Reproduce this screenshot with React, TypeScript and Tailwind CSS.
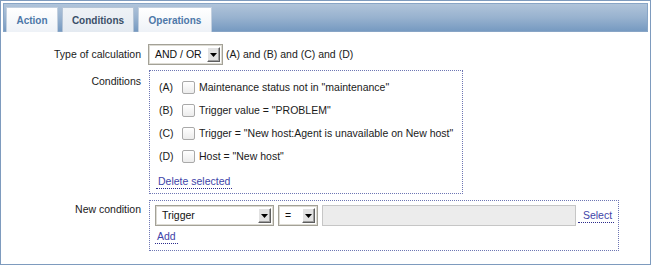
import React from "react";

const Arrow = () => (
  <span className="mr-[2px] flex h-[15px] w-[13px] shrink-0 items-center justify-center border border-t-white border-l-white border-b-[#5e5e5e] border-r-[#5e5e5e] bg-[#e2e2e2] shadow-[inset_-1px_-1px_0_#a0a0a0]">
    <svg width="7" height="4" viewBox="0 0 7 4">
      <polygon points="0,0 7,0 3.5,4" fill="#000" />
    </svg>
  </span>
);

const Select = ({ text, className }: { text: string; className: string }) => (
  <div
    className={
      "flex h-[21px] shrink-0 items-center border border-[#a3a197] bg-white shadow-[inset_0_0_0_1px_#dddbd3] " +
      className
    }
  >
    <span className="flex-1 whitespace-nowrap pl-[6px] text-[#111]">{text}</span>
    <Arrow />
  </div>
);

const Checkbox = () => (
  <span className="h-[13px] w-[13px] shrink-0 rounded-[2px] border border-[#a9a9a9] bg-gradient-to-b from-white to-[#ececec]" />
);

const LinkText = ({ children }: { children: React.ReactNode }) => (
  <span className="whitespace-nowrap border-b border-dotted border-[#2c2c8c] px-[2px] leading-[13px] text-[#3e44a8]">
    {children}
  </span>
);

const conditions = [
  ["(A)", 'Maintenance status not in "maintenance"'],
  ["(B)", 'Trigger value = "PROBLEM"'],
  ["(C)", 'Trigger = "New host:Agent is unavailable on New host"'],
  ["(D)", 'Host = "New host"'],
];

export default function App() {
  return (
    <div
      className="h-[265px] w-[651px] overflow-hidden bg-white text-[10.5px] text-[#1a1a1a]"
      style={{ fontFamily: '"Liberation Sans", Arial, sans-serif' }}
    >
      <div className="flex h-[265px] w-[651px] flex-col border border-[#7e9bbe] p-[2px]">
        {/* tab header */}
        <div className="flex h-[29px] shrink-0 items-end gap-[4px] border border-[#88a5c6] bg-gradient-to-b from-[#b0c4da] via-[#98b2cf] to-[#769ac1] pl-[2px]">
          <div className="-mb-px flex h-[25px] w-[52px] items-center justify-center border border-[#c3d0df] border-b-0 bg-gradient-to-b from-white to-[#eef2f7] font-bold text-[10px] text-[#4d77a8]">
            Action
          </div>
          <div className="-mb-px flex h-[25px] w-[72px] items-center justify-center border border-[#b4c4d6] border-b-0 bg-gradient-to-b from-[#eef2f6] to-[#e4eaf1] font-bold text-[10px] text-[#3a4f68]">
            Conditions
          </div>
          <div className="-mb-px flex h-[25px] w-[74px] items-center justify-center border border-[#c3d0df] border-b-0 bg-gradient-to-b from-white to-[#eef2f7] font-bold text-[10px] text-[#4d77a8]">
            Operations
          </div>
        </div>

        {/* form */}
        <div className="flex flex-col pt-[12px]">
          {/* type of calculation */}
          <div className="flex items-center">
            <div className="w-[138px] shrink-0 whitespace-nowrap text-right">Type of calculation</div>
            <div className="ml-[7px] flex items-center">
              <Select text="AND / OR" className="w-[75px]" />
              <span className="ml-[3px] whitespace-nowrap">(A) and (B) and (C) and (D)</span>
            </div>
          </div>

          {/* conditions */}
          <div className="mt-[5px] flex items-start">
            <div className="w-[138px] shrink-0 whitespace-nowrap pt-[4px] text-right">Conditions</div>
            <div className="ml-[8px] flex h-[124px] w-[314px] flex-col border border-dotted border-[#6e76b4] pl-[6px] pt-[5px]">
              {conditions.map(([l, t]) => (
                <div key={l} className="flex h-[23px] items-center pl-[3px]">
                  <span className="w-[23px] shrink-0">{l}</span>
                  <Checkbox />
                  <span className="ml-[4px] whitespace-nowrap">{t}</span>
                </div>
              ))}
              <div className="mt-[4px] flex h-[20px] items-center">
                <LinkText>Delete selected</LinkText>
              </div>
            </div>
          </div>

          {/* new condition */}
          <div className="mt-[6px] flex items-start">
            <div className="w-[138px] shrink-0 whitespace-nowrap pt-[2px] text-right">New condition</div>
            <div className="ml-[8px] flex h-[51px] w-[470px] flex-col border border-dotted border-[#6e76b4] pl-[5px] pt-[4px]">
              <div className="flex h-[21px] items-center">
                <Select text="Trigger" className="w-[119px]" />
                <Select text="=" className="ml-[4px] w-[40px]" />
                <div className="ml-[4px] h-[21px] w-[254px] border border-[#c6c6c6] bg-[#ececec]" />
                <span className="ml-[2px] flex h-[21px] items-center">
                  <LinkText>&nbsp;Select</LinkText>
                </span>
              </div>
              <div className="mt-[3px] flex h-[15px] items-center">
                <LinkText>Add</LinkText>
              </div>
            </div>
          </div>
        </div>
      </div>
    </div>
  );
}
